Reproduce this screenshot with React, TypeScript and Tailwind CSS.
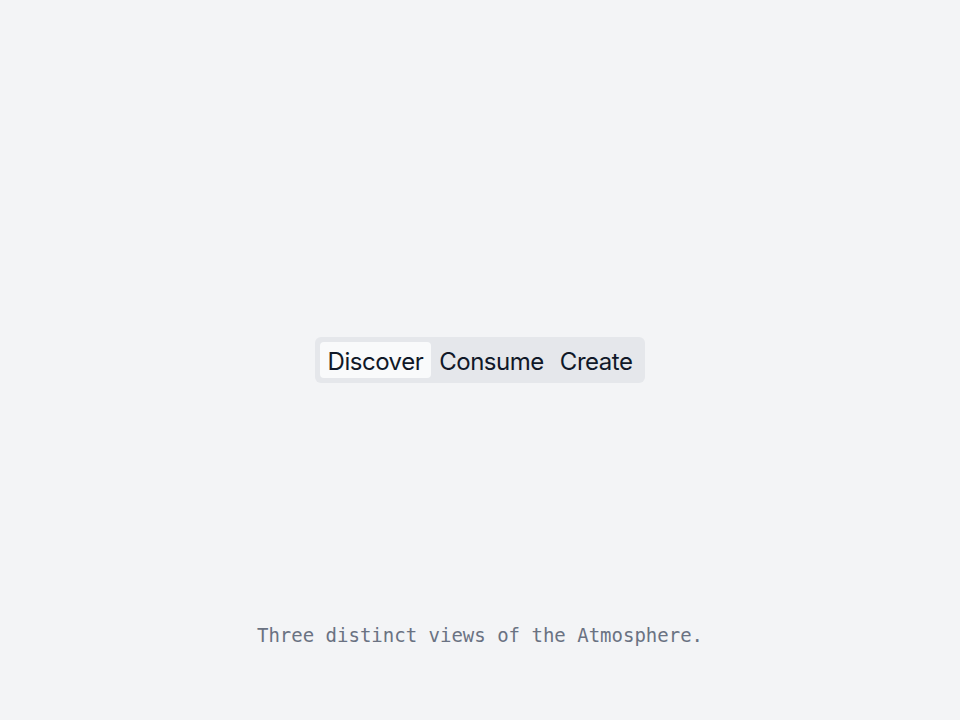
import React, { useState } from "react";

const tabs = ["Discover", "Consume", "Create"];

export default function App() {
  const [active, setActive] = useState("Discover");

  return (
    <div className="flex h-screen w-full flex-col bg-gray-100">
      <div className="flex-1" />
      <div className="flex justify-center">
        <div className="flex rounded-md bg-gray-200 p-[5px]">
          {tabs.map((tab) => (
            <button
              key={tab}
              onClick={() => setActive(tab)}
              className={
                active === tab
                  ? "h-9 rounded-sm bg-gray-50 px-2 pt-0.5 text-2xl leading-9 tracking-[-0.02em] text-gray-900 [font-family:Inter,sans-serif]"
                  : "h-9 rounded-sm px-2 pt-0.5 text-2xl leading-9 tracking-[-0.02em] text-gray-900 [font-family:Inter,sans-serif]"
              }
            >
              {tab}
            </button>
          ))}
        </div>
      </div>
      <div className="flex flex-1 items-end justify-center">
        <p className="mb-[71px] text-[19px] leading-7 text-gray-500 [font-family:'DejaVu_Sans_Mono',monospace]">
          Three distinct views of the Atmosphere.
        </p>
      </div>
    </div>
  );
}
